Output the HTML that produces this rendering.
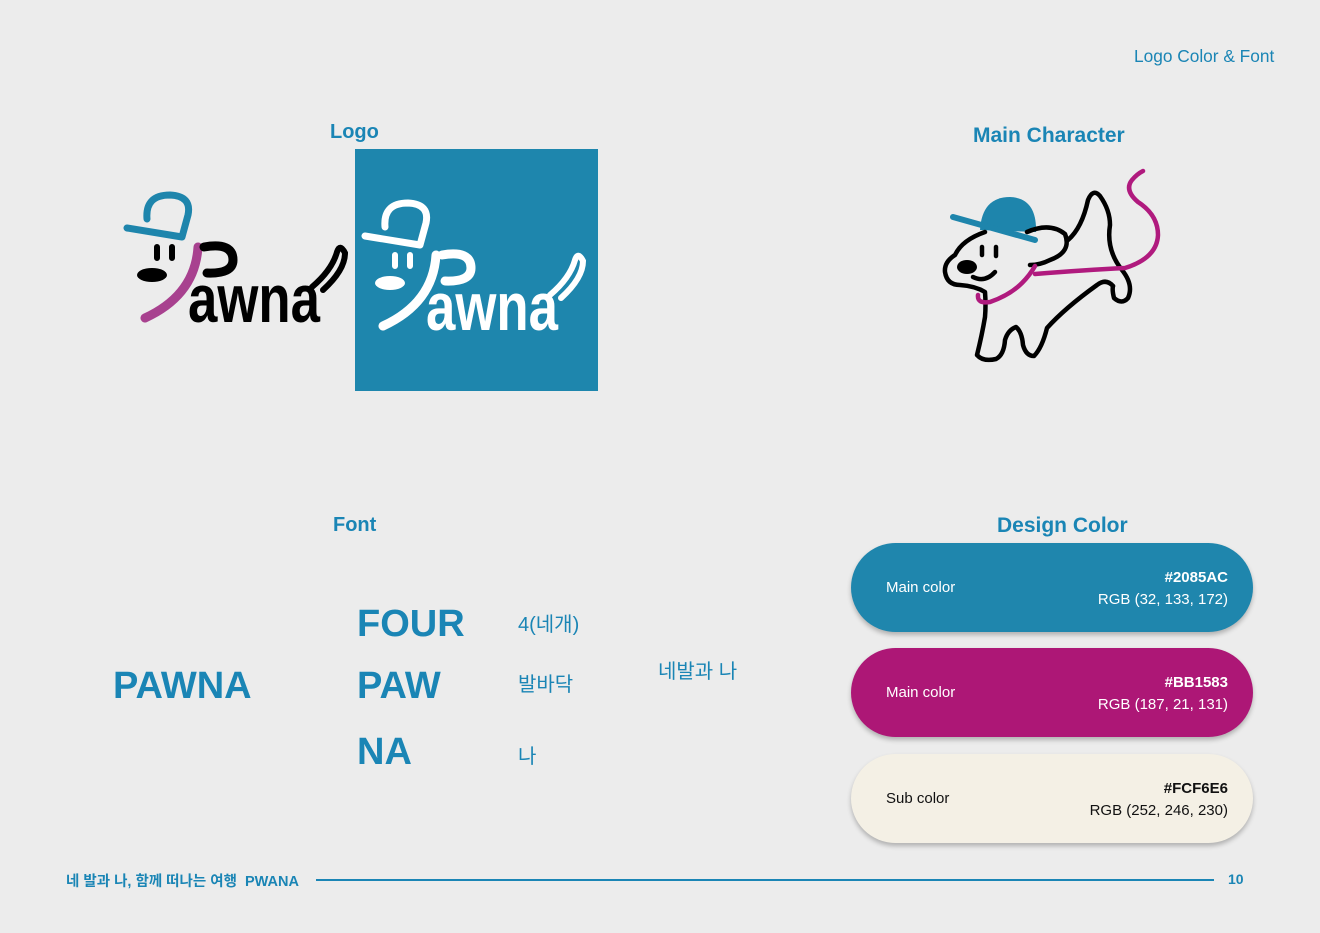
<!DOCTYPE html>
<html><head><meta charset="utf-8"><style>
*{margin:0;padding:0;box-sizing:border-box}
body{width:1320px;height:933px;background:#ececec;position:relative;overflow:hidden;font-family:"Liberation Sans","Noto Sans CJK KR",sans-serif;color:#1a85b5}
.a{position:absolute;white-space:nowrap}
.h{font-weight:bold;font-size:20px}
.big{font-weight:bold;font-size:38px}
.kr{font-size:20px}
.pill{position:absolute;left:851px;width:402px;height:89px;border-radius:45px;box-shadow:0 3px 5px rgba(0,0,0,.25)}
.pill .l{position:absolute;left:35px;top:36px;font-size:15px}
.pill .r{position:absolute;right:25px;top:24px;text-align:right;font-size:15px;line-height:22px}
.pill b{font-size:15px}
</style></head><body>
<div class="a" style="left:1134px;top:46px;font-size:17.3px">Logo Color &amp; Font</div>
<div class="a h" style="left:330px;top:121px">Logo</div>
<div class="a h" style="left:973px;top:124px;font-size:21px">Main Character</div>

<svg class="a" style="left:120px;top:190px" width="235" height="145" viewBox="0 0 235 145">
 <path d="M27,29 Q25,5 50,5 Q72,6 68,25 L62,47 M7,38 L62,47" fill="none" stroke="#1e85ac" stroke-width="7" stroke-linecap="round" stroke-linejoin="round"/>
 <path d="M37,57 v11 M52,57 v11" stroke="#000" stroke-width="6" stroke-linecap="round"/>
 <ellipse cx="32" cy="85" rx="15" ry="7" fill="#000"/>
 <path d="M78,57 Q75,105 25,128" fill="none" stroke="#a8418f" stroke-width="9" stroke-linecap="round"/>
 <path d="M84,57 Q113,52 113,70 Q113,84 87,83" fill="none" stroke="#000" stroke-width="9" stroke-linecap="round"/>
 <text x="68" y="132" font-family="Liberation Sans" font-weight="bold" font-size="68" fill="#000" textLength="132" lengthAdjust="spacingAndGlyphs">awna</text>
 <path d="M192,97 Q212,80 217,62 Q220,53 225,63 Q225,80 203,100" fill="none" stroke="#000" stroke-width="6" stroke-linecap="round"/>
</svg>

<div class="a" style="left:355px;top:149px;width:243px;height:242px;background:#1e86ad"></div>
<svg class="a" style="left:358px;top:198px" width="235" height="145" viewBox="0 0 235 145">
 <path d="M27,29 Q25,5 50,5 Q72,6 68,25 L62,47 M7,38 L62,47" fill="none" stroke="#fff" stroke-width="7" stroke-linecap="round" stroke-linejoin="round"/>
 <path d="M37,57 v11 M52,57 v11" stroke="#fff" stroke-width="6" stroke-linecap="round"/>
 <ellipse cx="32" cy="85" rx="15" ry="7" fill="#fff"/>
 <path d="M78,57 Q75,105 25,128" fill="none" stroke="#fff" stroke-width="9" stroke-linecap="round"/>
 <path d="M84,57 Q113,52 113,70 Q113,84 87,83" fill="none" stroke="#fff" stroke-width="9" stroke-linecap="round"/>
 <text x="68" y="132" font-family="Liberation Sans" font-weight="bold" font-size="68" fill="#fff" textLength="132" lengthAdjust="spacingAndGlyphs">awna</text>
 <path d="M192,97 Q212,80 217,62 Q220,53 225,63 Q225,80 203,100" fill="none" stroke="#fff" stroke-width="6" stroke-linecap="round"/>
</svg>

<svg class="a" style="left:930px;top:160px" width="240" height="210" viewBox="930 160 240 210">
 <path d="M980,230 Q982,197 1010,197 Q1037,198 1036,232 Z" fill="#1e85ac"/>
 <path d="M953,217 L1035,240" stroke="#1e85ac" stroke-width="6" stroke-linecap="round"/>
 <g fill="none" stroke="#000" stroke-width="4.5" stroke-linecap="round" stroke-linejoin="round">
  <path d="M985,232 Q962,240 955,255 Q944,262 945,272 Q947,285 960,285 Q975,286 985,292 Q986,305 985,317 Q982,335 977,355 Q983,362 996,359 Q1004,355 1005,340 Q1008,330 1016,327 Q1022,332 1023,345 Q1026,356 1034,356 Q1042,348 1047,328 Q1065,308 1097,285 Q1106,278 1113,286"/>
  <path d="M1027,232 Q1050,222 1065,234 Q1072,252 1050,260 Q1040,265 1030,265"/>
  <path d="M1068,240 Q1082,228 1088,200 Q1093,188 1100,196 Q1110,210 1110,225 Q1106,250 1122,270 Q1134,285 1128,298 Q1122,305 1114,298 Q1112,290 1113,286"/>
  <path d="M982,247 v8 M996,247 v9"/>
  <path d="M973,277 Q985,283 995,272"/>
 </g>
 <ellipse cx="967" cy="267" rx="10" ry="7" fill="#000"/>
 <g fill="none" stroke="#b01a7e" stroke-width="4.5" stroke-linecap="round" stroke-linejoin="round">
  <path d="M978,295 Q977,304 990,302 Q1010,295 1022,283 Q1030,275 1035,266"/>
  <path d="M1035,274 Q1085,270 1125,268 Q1157,258 1158,235 Q1158,215 1138,202 Q1124,190 1132,180 Q1137,174 1143,171"/>
 </g>
</svg>

<div class="a h" style="left:333px;top:514px">Font</div>
<div class="a h" style="left:997px;top:514px;font-size:21px">Design Color</div>
<div class="a big" style="left:113px;top:665px">PAWNA</div>
<div class="a big" style="left:357px;top:603px">FOUR</div>
<div class="a big" style="left:357px;top:665px">PAW</div>
<div class="a big" style="left:357px;top:731px">NA</div>
<div class="a kr" style="left:518px;top:608px">4(네개)</div>
<div class="a kr" style="left:518px;top:668px">발바닥</div>
<div class="a kr" style="left:518px;top:740px">나</div>
<div class="a kr" style="left:658px;top:655px">네발과 나</div>

<div class="pill" style="top:543px;background:#1f86ad;color:#fff"><div class="l">Main color</div><div class="r"><b>#2085AC</b><br>RGB (32, 133, 172)</div></div>
<div class="pill" style="top:648px;background:#ad1776;color:#fff"><div class="l">Main color</div><div class="r"><b>#BB1583</b><br>RGB (187, 21, 131)</div></div>
<div class="pill" style="top:754px;background:#f4f0e5;color:#111"><div class="l">Sub color</div><div class="r"><b>#FCF6E6</b><br>RGB (252, 246, 230)</div></div>

<div class="a" style="left:66px;top:870px;font-size:14.5px;font-weight:bold">네 발과 나, 함께 떠나는 여행&nbsp;&nbsp;PWANA</div>
<div class="a" style="left:316px;top:879px;width:898px;height:2px;background:#1a85b5"></div>
<div class="a" style="left:1228px;top:871px;font-size:14px;font-weight:bold">10</div>
</body></html>
